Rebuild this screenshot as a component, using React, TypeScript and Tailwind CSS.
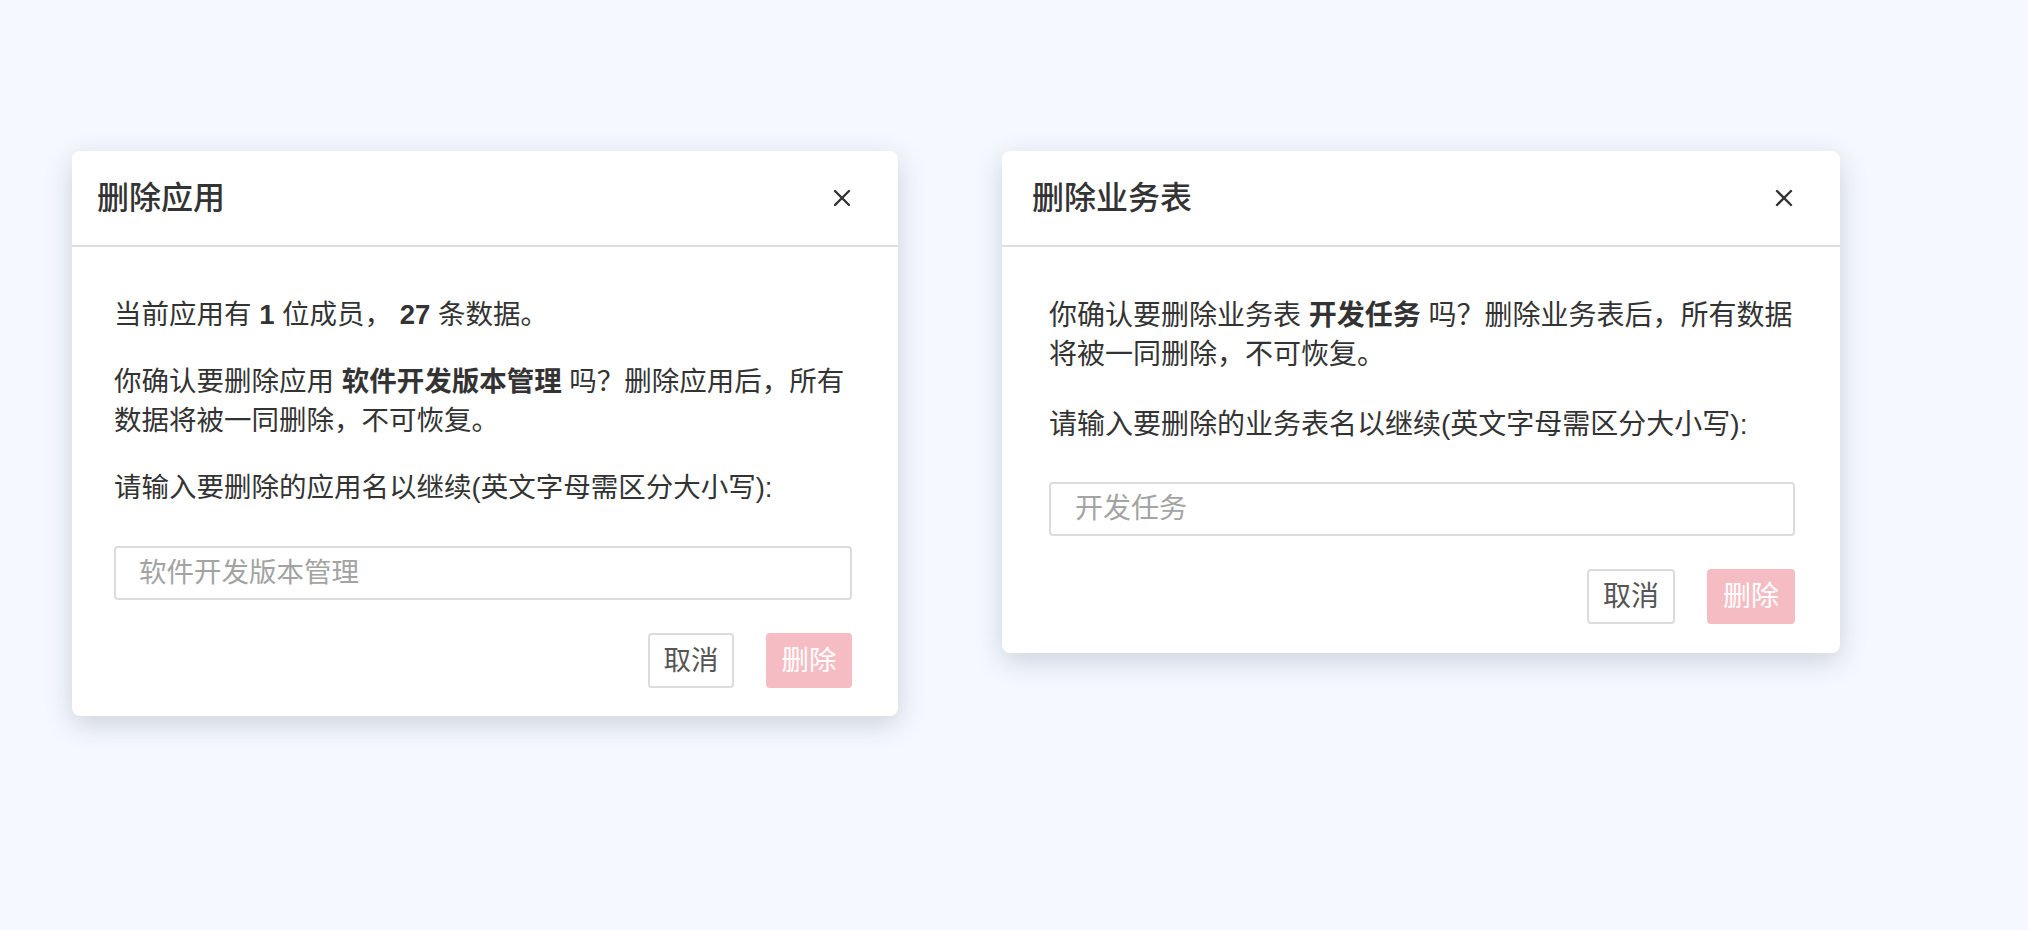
import React from "react";

function CloseIcon() {
  return (
    <svg width="18" height="18" viewBox="0 0 18 18" fill="none" className="block">
      <path d="M2 2L16 16M16 2L2 16" stroke="#333" strokeWidth="2.4" strokeLinecap="round" />
    </svg>
  );
}

type DialogProps = {
  title: string;
  titlePad: string;
  width: string;
  bodyPad: string;
  textSize: string;
  inputPad: string;
  placeholder: string;
  btnW: string;
  children: React.ReactNode;
};

function Dialog({ title, titlePad, width, bodyPad, textSize, inputPad, placeholder, btnW, children }: DialogProps) {
  return (
    <div className={`${width} bg-white rounded-lg shadow-[0_8px_28px_rgba(40,55,90,0.2)]`}>
      <div className={`h-[96px] flex items-center justify-between ${titlePad} pr-[47px] border-b-2 border-[#dedede]`}>
        <h2 className="text-[32px] font-medium text-[#333]">{title}</h2>
        <button className="p-0">
          <CloseIcon />
        </button>
      </div>
      <div className={`${bodyPad} ${textSize} text-[#333]`}>
        {children}
        <input
          placeholder={placeholder}
          className={`w-full h-[54px] ${inputPad} border-2 border-[#dcdcdc] rounded-[4px] ${textSize} placeholder:text-[#a3a3a3] outline-none`}
        />
        <div className="flex justify-end gap-[32px] mt-[33px]">
          <button className={`${btnW} h-[55px] border-2 border-[#dcdcdc] rounded-[4px] text-[#555] bg-white`}>取消</button>
          <button className={`${btnW} h-[55px] rounded-[4px] text-white bg-[#f5bdc3]`}>删除</button>
        </div>
      </div>
    </div>
  );
}

export default function App() {
  return (
    <div
      className="min-h-screen w-full bg-[#f5f8fe] flex items-start gap-[104px] pl-[72px] pt-[151px]"
      style={{ fontFamily: '"Liberation Sans", "Noto Sans CJK SC", sans-serif' }}
    >
      <Dialog
        title="删除应用"
        titlePad="pl-[25px]"
        width="w-[826px]"
        bodyPad="pt-[48px] pb-[28px] pl-[42px] pr-[46px]"
        textSize="text-[27.5px]"
        inputPad="pl-[23px]"
        placeholder="软件开发版本管理"
        btnW="w-[86px]"
      >
        <p className="leading-[39px] mb-[28px]">
          当前应用有 <span className="font-semibold">1</span> 位成员， <span className="font-semibold">27</span> 条数据。
        </p>
        <p className="leading-[39px] mb-[28px] whitespace-nowrap">
          你确认要删除应用 <span className="font-semibold">软件开发版本管理</span> 吗？删除应用后，所有
          <br />
          数据将被一同删除，不可恢复。
        </p>
        <p className="leading-[39px] mb-[39px]">请输入要删除的应用名以继续(英文字母需区分大小写):</p>
      </Dialog>
      <Dialog
        title="删除业务表"
        titlePad="pl-[30px]"
        width="w-[838px]"
        bodyPad="pt-[49px] pb-[29px] pl-[47px] pr-[45px]"
        textSize="text-[28px]"
        inputPad="pl-[24px]"
        placeholder="开发任务"
        btnW="w-[88px]"
      >
        <p className="leading-[39px] mb-[31px] whitespace-nowrap">
          你确认要删除业务表 <span className="font-semibold">开发任务</span> 吗？删除业务表后，所有数据
          <br />
          将被一同删除，不可恢复。
        </p>
        <p className="leading-[39px] mb-[38px]">请输入要删除的业务表名以继续(英文字母需区分大小写):</p>
      </Dialog>
    </div>
  );
}
